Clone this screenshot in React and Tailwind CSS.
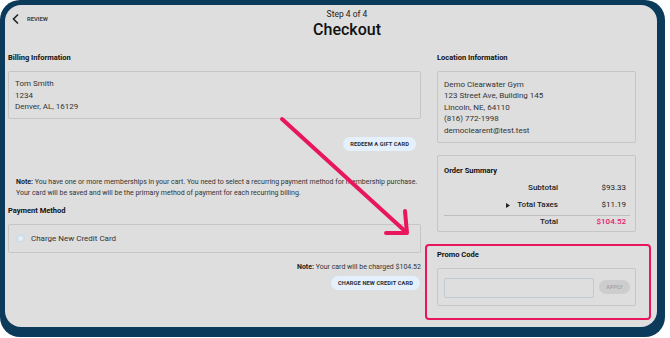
import React from 'react';

function Pill({ children, className = '' }) {
  return (
    <button className={`h-[14px] rounded-full bg-[#e4f0fb] px-[7px] text-[5.7px] font-bold uppercase leading-[14px] tracking-[0.1px] text-[#2a2f36] ${className}`}>
      {children}
    </button>
  );
}

function Arrow() {
  return (
    <svg className="pointer-events-none absolute left-0 top-0" width="670" height="338" viewBox="0 0 670 338">
      <g stroke="#e8175d" strokeWidth="4" strokeLinecap="round" strokeLinejoin="round" fill="none">
        <line x1="282" y1="119" x2="406" y2="232" />
        <polyline points="405,211 407,233 386,233" />
      </g>
    </svg>
  );
}

export default function App() {
  return (
    <div className="relative h-[338px] w-[670px] bg-white font-['Roboto',sans-serif] text-[#333]">
      <div className="h-[337px] w-[665px] rounded-[20px] bg-[#0c3a5b] pb-[10px] pl-[5px] pr-[8px] pt-[5px]">
        <div className="h-full w-full rounded-[16px] bg-[#dedede] pl-[3px]">
          {/* header */}
          <div className="flex items-start pt-[3.5px]">
            <div className="flex w-[239px] items-center pl-[3px] pt-[4.5px]">
              <svg width="10" height="12" viewBox="0 0 10 12">
                <polyline points="7,1.5 2.5,6 7,10.5" fill="none" stroke="#222" strokeWidth="1.6" />
              </svg>
              <span className="ml-[6px] text-[5.8px] font-bold uppercase text-[#444]">Review</span>
            </div>
            <div className="w-[200px] text-center">
              <div className="text-[8.5px] leading-[11px] text-[#222]">Step 4 of 4</div>
              <div className="mt-[0.5px] text-[16px] font-medium leading-[20px] text-[#111]">Checkout</div>
            </div>
          </div>

          <div className="mt-[13px] flex gap-[16px]">
            {/* left column */}
            <div className="flex w-[413px] flex-col">
              <div className="h-[10px] text-[7.5px] font-bold leading-[10px] text-[#111]">Billing Information</div>
              <div className="mt-[8px] h-[48px] rounded-[2px] border border-[#c6c6c6] pl-[6px] pt-[6px] text-[8px] leading-[11.5px]">
                <div>Tom Smith</div>
                <div>1234</div>
                <div>Denver, AL, 16129</div>
              </div>
              <Pill className="mr-[5px] mt-[18px] self-end">Redeem a gift card</Pill>
              <div className="mt-[25.5px] whitespace-nowrap pl-[8px] text-[7px] leading-[11px] text-[#333]">
                <div><span className="font-bold text-[#222]">Note:</span> You have one or more memberships in your cart. You need to select a recurring payment method for membership purchase.</div>
                <div>Your card will be saved and will be the primary method of payment for each recurring billing.</div>
              </div>
              <div className="mt-[7.5px] h-[10px] text-[7.5px] font-bold leading-[10px] text-[#111]">Payment Method</div>
              <div className="mt-[8px] flex h-[29px] items-center rounded-[2px] border border-[#c6c6c6] pl-[7px]">
                <span className="flex h-[9px] w-[9px] items-center justify-center rounded-full bg-[#cddde9]">
                  <span className="h-[5px] w-[5px] rounded-full bg-[#e6edf3]" />
                </span>
                <span className="ml-[6px] text-[8px] text-[#333]">Charge New Credit Card</span>
              </div>
              <div className="mt-[9px] h-[10px] text-right text-[7px] leading-[10px]">
                <span className="font-bold text-[#222]">Note:</span> Your card will be charged $104.52
              </div>
              <Pill className="mr-[1px] mt-[4px] self-end">Charge new credit card</Pill>
            </div>

            {/* right column */}
            <div className="flex w-[199px] flex-col">
              <div className="h-[10px] text-[7.5px] font-bold leading-[10px] text-[#111]">Location Information</div>
              <div className="mt-[8px] h-[72px] rounded-[2px] border border-[#c6c6c6] pl-[6px] pt-[6.5px] text-[8px] leading-[11.5px]">
                <div>Demo Clearwater Gym</div>
                <div>123 Street Ave, Building 145</div>
                <div>Lincoln, NE, 64110</div>
                <div>(816) 772-1998</div>
                <div>democlearent@test.test</div>
              </div>
              <div className="mt-[12px] h-[77px] rounded-[2px] border border-[#c6c6c6] pl-[6px] pr-[5px] pt-[10px]">
                <div className="h-[10px] text-[7.5px] font-bold leading-[10px] text-[#111]">Order Summary</div>
                <div className="mt-[6px] flex h-[12px] pr-[4px] text-[8px] font-medium leading-[12px] text-[#222]">
                  <div className="flex-1 text-right">Subtotal</div>
                  <div className="w-[68px] text-right font-normal">$93.33</div>
                </div>
                <div className="mt-[5px] flex h-[12px] pr-[4px] text-[8px] font-medium leading-[12px] text-[#222]">
                  <div className="flex flex-1 items-center justify-end">
                    <svg width="4" height="5" viewBox="0 0 4 5" className="mr-[7px]">
                      <polygon points="0,0 4,2.5 0,5" fill="#222" />
                    </svg>
                    Total Taxes
                  </div>
                  <div className="w-[68px] text-right font-normal">$11.19</div>
                </div>
                <div className="mt-[4px] flex h-[12px] border-t border-[#bdbdbd] pr-[4px] text-[8px] font-medium leading-[12px] text-[#222]">
                  <div className="flex-1 text-right">Total</div>
                  <div className="w-[68px] text-right font-medium text-[#e8176b]">$104.52</div>
                </div>
              </div>
              <div className="-ml-[12px] mt-[12px] h-[76px] w-[226px] rounded-[4px] border-2 border-[#e8175d] pb-[12px] pl-[10px] pr-[13px] pt-[4px]">
                <div className="h-[10px] text-[7.5px] font-bold leading-[10px] text-[#111]">Promo Code</div>
                <div className="mt-[8px] flex h-[38px] items-start rounded-[2px] border border-[#c6c6c6] pl-[6px] pt-[9px]">
                  <div className="h-[20px] w-[150px] rounded-[2px] border border-[#bccbd4]" />
                  <button className="ml-[5px] mt-[2px] h-[14px] w-[31px] rounded-full bg-[#cdcdcd] text-[5.5px] font-bold leading-[14px] text-[#a9a9a9]">APPLY</button>
                </div>
              </div>
            </div>
          </div>
        </div>
      </div>
      <Arrow />
    </div>
  );
}
